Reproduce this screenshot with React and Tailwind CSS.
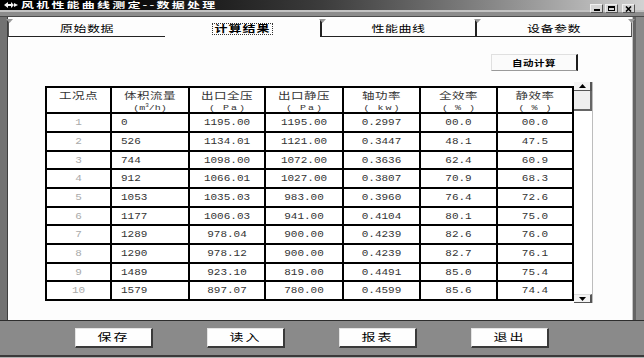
import React from 'react';

const rows = [
  ['1', '0', '1195.00', '1195.00', '0.2997', '00.0', '00.0'],
  ['2', '526', '1134.01', '1121.00', '0.3447', '48.1', '47.5'],
  ['3', '744', '1098.00', '1072.00', '0.3636', '62.4', '60.9'],
  ['4', '912', '1066.01', '1027.00', '0.3807', '70.9', '68.3'],
  ['5', '1053', '1035.03', '983.00', '0.3960', '76.4', '72.6'],
  ['6', '1177', '1006.03', '941.00', '0.4104', '80.1', '75.0'],
  ['7', '1289', '978.04', '900.00', '0.4239', '82.6', '76.0'],
  ['8', '1290', '978.12', '900.00', '0.4239', '82.7', '76.1'],
  ['9', '1489', '923.10', '819.00', '0.4491', '85.0', '75.4'],
  ['10', '1579', '897.07', '780.00', '0.4599', '85.6', '74.4'],
];

const rowH = ['h-[19px]', 'h-[19px]', 'h-[18px]', 'h-[19px]', 'h-[19px]', 'h-[18px]', 'h-[19px]', 'h-[19px]', 'h-[18px]', 'h-[19px]'];

const headers = [
  ['工况点', ''],
  ['体积流量', 'm3'],
  ['出口全压', 'Pa'],
  ['出口静压', 'Pa'],
  ['轴功率', 'kw'],
  ['全效率', '%'],
  ['静效率', '%'],
];

const cjk = "font-['Noto_Sans_CJK_SC','Noto_Sans',sans-serif]";
const mono = "font-['Liberation_Mono',monospace]";

function Cjk({ className = '', children }) {
  return <span className={`inline-block ${cjk} ${className}`}>{children}</span>;
}

function Tri() {
  return (
    <svg width="7" height="5" viewBox="0 0 7 5" className="absolute -top-[1px] -left-[3px]">
      <path d="M0 0 L7 0 L3.5 4 Z" fill="#9a9a9a" />
    </svg>
  );
}

function Tab({ label, selected, first, last, w }) {
  return (
    <div
      className={`relative ${w} h-[17px] flex items-center justify-center ${
        selected ? '' : 'border-b border-b-[#222]'
      } ${first ? 'border-l border-l-[#555]' : ''} ${!first && !selected ? 'border-l-2 border-l-[#222]' : ''} ${
        last ? 'border-r border-r-[#555]' : ''
      }`}
    >
      {!selected && <Tri />}
      {selected ? (
        <span className="border border-dotted border-[#333] px-[1px] leading-[11px] h-[12px] flex items-center">
          <Cjk className="text-[13px] font-bold tracking-[1px] scale-y-[0.72] text-black">{label}</Cjk>
        </span>
      ) : (
        <Cjk className="text-[13px] tracking-[0.5px] scale-y-[0.72] text-black">{label}</Cjk>
      )}
      {last && (
        <svg width="7" height="5" viewBox="0 0 7 5" className="absolute -top-[1px] -right-[4px]">
          <path d="M0 0 L7 0 L3.5 4 Z" fill="#9a9a9a" />
        </svg>
      )}
    </div>
  );
}

function Btn({ label }) {
  return (
    <div className="w-[78px] h-[20px] bg-[#fefefe] border-t border-l border-t-[#e4e4e4] border-l-[#e4e4e4] border-r-2 border-b-2 border-r-[#3a3a3a] border-b-[#3a3a3a] flex items-center justify-center">
      <Cjk className="text-[14px] tracking-[2px] scale-y-[0.72] text-black">{label}</Cjk>
    </div>
  );
}

function Unit({ u }) {
  if (!u) return null;
  return (
    <div className={`flex items-center justify-center h-[12px] text-[10px] text-[#333] ${mono}`}>
      <span className="inline-block scale-y-[0.8]">
        (
        {u === 'm3' ? (
          <>
            m<sup className="text-[6px]">3</sup>/h
          </>
        ) : u === '%' ? (
          <span className="tracking-[1px]"> % </span>
        ) : (
          <span className="tracking-[2px]"> {u}</span>
        )}
        )
      </span>
    </div>
  );
}

const cols = 'grid grid-cols-[65px_78px_76px_78px_77px_77px_76px]';

export default function App() {
  return (
    <div className="w-[644px] h-[358px] bg-[#8a8a8a] flex flex-col overflow-hidden">
      {/* title bar */}
      <div className="h-[10px] flex items-center bg-gradient-to-r from-[#000000] via-[#3c3c3c] to-[#d2d2d2] relative">
        <svg width="16" height="8" viewBox="0 0 16 8" className="ml-[3px]">
          <path d="M1 4 L5 1 L5 3 L8 3 L8 1 L11 4 L8 7 L8 5 L5 5 L5 7 Z" fill="#f4f4f4" />
          <path d="M11 2 L15 4 L11 6 Z" fill="#f4f4f4" />
        </svg>
        <Cjk className="ml-[2px] text-[13px] font-bold tracking-[2.2px] text-white scale-y-[0.62] leading-[10px]">
          风机性能曲线测定--数据处理
        </Cjk>
        <div className="ml-auto mr-[9px] mt-[4px] flex gap-[2px] self-start">
          <div className="w-[13px] h-[9px] bg-[#d6d6d6] border border-[#555] border-t-[#f0f0f0] border-l-[#f0f0f0] flex items-end justify-center">
            <div className="w-[6px] h-[2px] bg-black mb-[1px]" />
          </div>
          <div className="w-[13px] h-[9px] bg-[#d6d6d6] border border-[#555] border-t-[#f0f0f0] border-l-[#f0f0f0] flex items-center justify-center">
            <div className="w-[7px] h-[5px] border border-black border-t-2" />
          </div>
          <div className="ml-[2px] w-[13px] h-[9px] bg-[#d6d6d6] border border-[#555] border-t-[#f0f0f0] border-l-[#f0f0f0] flex items-center justify-center">
            <svg width="7" height="6" viewBox="0 0 7 6">
              <path d="M1 0.5 L6 5.5 M6 0.5 L1 5.5" stroke="#000" strokeWidth="1.6" />
            </svg>
          </div>
        </div>
      </div>
      <div className="h-[2px] bg-[#c2c2c2]" />
      <div className="h-[4px] bg-[#8c8c8c]" />
      <div className="h-[1px] bg-[#4a4a4a]" />

      {/* main */}
      <div className="flex h-[303px]">
        <div className="w-[8px] bg-[#727272] border-r border-r-[#3e3e3e]" />
        <div className="w-[624px] bg-[#fdfdfd] flex flex-col">
          {/* tabs */}
          <div className="mt-[3px] flex">
            <Tab label="原始数据" first w="w-[157px]" />
            <Tab label="计算结果" selected w="w-[155px]" />
            <Tab label="性能曲线" w="w-[155px]" />
            <Tab label="设备参数" last w="w-[157px]" />
          </div>
          {/* auto button */}
          <div className="mt-[17px] pl-[483px] flex">
            <div className="w-[87px] h-[17px] bg-[#fbfbfb] border-t border-l border-t-[#e0e0e0] border-l-[#e0e0e0] border-r-2 border-b border-r-[#1e1e1e] border-b-[#9a9a9a] flex items-center justify-center">
              <Cjk className="text-[10.5px] font-bold tracking-[0.5px] text-black scale-y-[0.75]">自动计算</Cjk>
            </div>
          </div>
          {/* table + scrollbar */}
          <div className="mt-[11px] pl-[37px] flex items-start">
            <div className="mt-[4px] w-[529px] border-t-2 border-l-2 border-black bg-white">
              <div className={cols}>
                {headers.map(([h, u], i) => (
                  <div key={i} className="h-[26px] border-r-2 border-b-2 border-black flex flex-col items-center pt-[1px]">
                    <div className="h-[12px] flex items-center">
                      <Cjk className="text-[12.5px] tracking-[0.5px] text-[#333] scale-y-[0.72] leading-[12px]">{h}</Cjk>
                    </div>
                    <Unit u={u} />
                  </div>
                ))}
              </div>
              {rows.map((r, ri) => (
                <div key={ri} className={cols}>
                  {r.map((c, ci) => (
                    <div
                      key={ci}
                      className={`${rowH[ri]} border-r-2 border-b-2 border-black flex items-center ${mono} text-[11px] ${
                        ci === 1 ? 'justify-start pl-[9px]' : 'justify-center'
                      } ${ci === 0 ? 'text-[#aaaaaa]' : 'text-[#333]'}`}
                    >
                      <span className="inline-block scale-y-[0.85]">{c}</span>
                    </div>
                  ))}
                </div>
              ))}
            </div>
            {/* scrollbar */}
            <div className="w-[19px] h-[221px] flex flex-col bg-white border-r border-r-[#bdbdbd]">
              <div className="h-[9px] bg-[#f4f4f4] border-r-2 border-b border-r-[#555] border-b-[#555] flex items-center justify-center">
                <svg width="7" height="4" viewBox="0 0 7 4">
                  <path d="M0 4 L7 4 L3.5 0 Z" fill="#000" />
                </svg>
              </div>
              <div className="h-[20px] bg-[#efefef] border-r-2 border-b-2 border-r-[#666] border-b-[#666]" />
              <div className="flex-1 bg-white" />
              <div className="h-[9px] bg-[#f4f4f4] border-r-2 border-b border-t border-t-[#ddd] border-r-[#555] border-b-[#555] flex items-center justify-center">
                <svg width="7" height="4" viewBox="0 0 7 4">
                  <path d="M0 0 L7 0 L3.5 4 Z" fill="#000" />
                </svg>
              </div>
            </div>
          </div>
        </div>
        <div className="w-[12px] flex">
          <div className="w-[1px] bg-[#c4c4c4]" />
          <div className="w-[3px] bg-[#646464]" />
          <div className="flex-1 bg-[#8a8a8a]" />
        </div>
      </div>
      <div className="h-[1px] bg-[#2e2e2e]" />

      {/* bottom buttons */}
      <div className="flex-1 flex flex-col">
        <div className="mt-[7px] pl-[75px] flex gap-[54px]">
          <Btn label="保存" />
          <Btn label="读入" />
          <Btn label="报表" />
          <Btn label="退出" />
        </div>
        <div className="mt-auto h-[2px] bg-[#3a3a3a]" />
        <div className="h-[1px] bg-[#b0b0b0]" />
      </div>
    </div>
  );
}
